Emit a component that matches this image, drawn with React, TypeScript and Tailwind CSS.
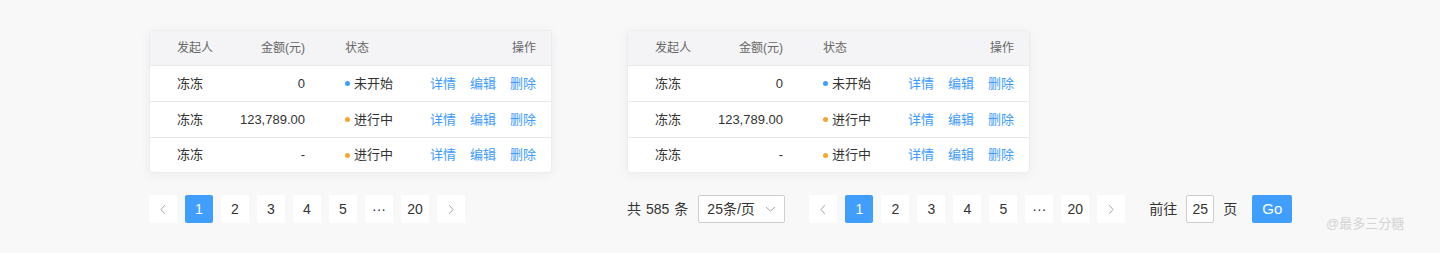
import React from 'react'

const font = { fontFamily: '"Liberation Sans", "Noto Sans CJK SC", sans-serif' }

const rows = [
  { name: '冻冻', amount: '0', status: '未开始', dot: 'bg-[#409eff]', h: 'h-[36px] border-b' },
  { name: '冻冻', amount: '123,789.00', status: '进行中', dot: 'bg-[#f7a530]', h: 'h-[36px] border-b' },
  { name: '冻冻', amount: '-', status: '进行中', dot: 'bg-[#f7a530]', h: 'h-[34px]' },
]

const Chevron = ({ dir }: { dir: 'left' | 'right' | 'down' }) => {
  const d =
    dir === 'left' ? 'M6.5 1.5 L3 5.5 L6.5 9.5' : dir === 'right' ? 'M3.5 1.5 L7 5.5 L3.5 9.5' : 'M1.5 3.5 L5.5 7 L9.5 3.5'
  return (
    <svg width="11" height="11" viewBox="0 0 11 11" fill="none">
      <path d={d} stroke="#a6a6a6" strokeWidth="1" strokeLinecap="round" strokeLinejoin="round" />
    </svg>
  )
}

const Table = () => (
  <div className="w-[403px] overflow-hidden rounded-[4px] border border-[#ececec] bg-white shadow-[0_2px_12px_rgba(0,0,0,0.05)]">
    <div className="grid h-[35px] grid-cols-[52px_76px_1fr_auto] items-center border-b border-[#e8e8e8] bg-[#f4f4f6] pl-[27px] pr-[15px] text-[12px] text-[#666]">
      <div>发起人</div>
      <div className="text-right">金额(元)</div>
      <div className="pl-[40px]">状态</div>
      <div className="text-right">操作</div>
    </div>
    {rows.map((r, i) => (
      <div
        key={i}
        className={`grid grid-cols-[52px_76px_1fr_auto] items-center border-[#e8e8e8] pl-[27px] pr-[15px] text-[13px] text-[#333] ${r.h}`}
      >
        <div>{r.name}</div>
        <div className="text-right">{r.amount}</div>
        <div className="flex items-center gap-[4px] pl-[40px]">
          <span className={`h-[5px] w-[5px] rounded-full ${r.dot}`} />
          <span>{r.status}</span>
        </div>
        <div className="flex gap-[14px] text-[#3d9bff]">
          <span>详情</span>
          <span>编辑</span>
          <span>删除</span>
        </div>
      </div>
    ))}
  </div>
)

const PageBtn = ({ children, active }: { children: React.ReactNode; active?: boolean }) => (
  <div
    className={`flex h-[28px] w-[28px] items-center justify-center rounded-[2px] text-[14px] ${
      active ? 'bg-[#409eff] text-white' : 'bg-white text-[#333]'
    }`}
  >
    {children}
  </div>
)

const Pager = () => (
  <div className="flex gap-[8px]">
    <PageBtn>
      <Chevron dir="left" />
    </PageBtn>
    <PageBtn active>1</PageBtn>
    <PageBtn>2</PageBtn>
    <PageBtn>3</PageBtn>
    <PageBtn>4</PageBtn>
    <PageBtn>5</PageBtn>
    <PageBtn>···</PageBtn>
    <PageBtn>20</PageBtn>
    <PageBtn>
      <Chevron dir="right" />
    </PageBtn>
  </div>
)

export default function App() {
  return (
    <div className="relative h-[253px] w-[1440px] bg-[#f8f8f8]" style={font}>
      <div className="flex gap-[75px] pl-[149px] pt-[30px]">
        <div className="flex flex-col gap-[22px]">
          <Table />
          <Pager />
        </div>
        <div className="flex flex-col gap-[22px]">
          <Table />
          <div className="flex items-center text-[14px] text-[#333]">
            <span className="flex gap-[5px]">
              <span>共</span>
              <span>585</span>
              <span>条</span>
            </span>
            <div className="ml-[10px] flex h-[28px] w-[87px] items-center justify-between rounded-[2px] border border-[#cfcfcf] bg-white pl-[8px] pr-[8px]">
              <span>25条/页</span>
              <Chevron dir="down" />
            </div>
            <div className="ml-[24px]">
              <Pager />
            </div>
            <span className="ml-[24px]">前往</span>
            <div className="ml-[9px] flex h-[28px] w-[28px] items-center justify-center rounded-[2px] border border-[#cfcfcf] bg-white">
              25
            </div>
            <span className="ml-[9px]">页</span>
            <div className="ml-[15px] flex h-[28px] w-[40px] items-center justify-center rounded-[2px] bg-[#409eff] text-[15px] text-white">
              Go
            </div>
          </div>
        </div>
      </div>
      <div className="absolute left-[1326px] top-[214px] text-[13px] text-[#d4d4d4]">@最多三分糖</div>
    </div>
  )
}
